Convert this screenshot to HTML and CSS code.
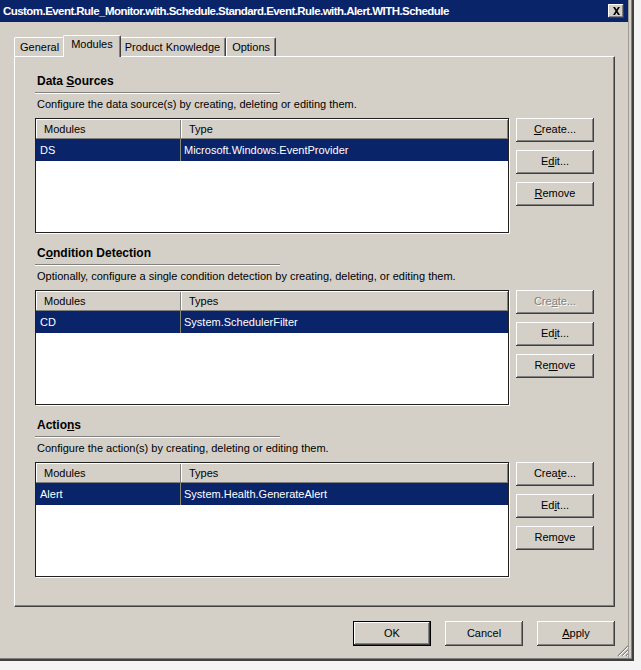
FILE: index.html
```html
<!DOCTYPE html>
<html lang="en">
<head>
    <meta charset="UTF-8">
    <title>Rule Properties</title>
    <link rel="stylesheet" href="styles.css">
</head>
<body>
    <div class="window">
        <div class="titlebar">
            <span class="title">Custom.Event.Rule_Monitor.with.Schedule.Standard.Event.Rule.with.Alert.WITH.Schedule</span>
            <span class="close">
                <svg width="9" height="8" viewBox="0 0 9 8"><path d="M1 0h2l1.5 2.5L6 0h2L5.5 4 8 8H6L4.5 5.5 3 8H1l2.5-4z" fill="#000"/></svg>
            </span>
        </div>

        <div class="tabs">
            <div class="tab">General</div>
            <div class="tab active">Modules</div>
            <div class="tab">Product Knowledge</div>
            <div class="tab">Options</div>
        </div>

        <div class="panel">
            <!-- Data sources -->
            <div class="section first">
                <div class="heading">Data <u>S</u>ources</div>
                <div class="rule"></div>
                <div class="desc">Configure the data source(s) by creating, deleting or editing them.</div>
                <div class="section-body">
                    <div class="list">
                        <div class="list-head">
                            <div class="col c1">Modules</div>
                            <div class="col c2">Type</div>
                        </div>
                        <div class="list-row selected">
                            <div class="col c1">DS</div>
                            <div class="col c2">Microsoft.Windows.EventProvider</div>
                        </div>
                    </div>
                    <div class="side-buttons">
                        <div class="btn"><u>C</u>reate...</div>
                        <div class="btn">E<u>d</u>it...</div>
                        <div class="btn"><u>R</u>emove</div>
                    </div>
                </div>
            </div>

            <!-- Condition detection -->
            <div class="section">
                <div class="heading">C<u>o</u>ndition Detection</div>
                <div class="rule"></div>
                <div class="desc">Optionally, configure a single condition detection by creating, deleting, or editing them.</div>
                <div class="section-body">
                    <div class="list">
                        <div class="list-head">
                            <div class="col c1">Modules</div>
                            <div class="col c2">Types</div>
                        </div>
                        <div class="list-row selected">
                            <div class="col c1">CD</div>
                            <div class="col c2">System.SchedulerFilter</div>
                        </div>
                    </div>
                    <div class="side-buttons">
                        <div class="btn disabled">Cre<u>a</u>te...</div>
                        <div class="btn">Ed<u>i</u>t...</div>
                        <div class="btn">Re<u>m</u>ove</div>
                    </div>
                </div>
            </div>

            <!-- Actions -->
            <div class="section">
                <div class="heading">Actio<u>n</u>s</div>
                <div class="rule"></div>
                <div class="desc">Configure the action(s) by creating, deleting or editing them.</div>
                <div class="section-body">
                    <div class="list">
                        <div class="list-head">
                            <div class="col c1">Modules</div>
                            <div class="col c2">Types</div>
                        </div>
                        <div class="list-row selected">
                            <div class="col c1">Alert</div>
                            <div class="col c2">System.Health.GenerateAlert</div>
                        </div>
                    </div>
                    <div class="side-buttons">
                        <div class="btn">Crea<u>t</u>e...</div>
                        <div class="btn">Ed<u>i</u>t...</div>
                        <div class="btn">Rem<u>o</u>ve</div>
                    </div>
                </div>
            </div>
        </div>

        <div class="footer">
            <div class="btn default">OK</div>
            <div class="btn">Cancel</div>
            <div class="btn"><u>A</u>pply</div>
        </div>
        <svg class="grip" width="12" height="12" viewBox="0 0 12 12">
            <path d="M11 1L1 11M11 5L5 11M11 9L9 11" stroke="#808080" stroke-width="1.2"/>
            <path d="M11 2L2 11M11 6L6 11M11 10L10 11" stroke="#fff" stroke-width="1"/>
        </svg>
    </div>
</body>
</html>
```

FILE: styles.css
```css
body {
    margin: 0;
    background-color: #f4f4f4;
    font-family: "Liberation Sans", Arial, sans-serif;
    font-size: 11px;
    color: #000;
}
u {
    text-decoration-thickness: 1px;
    text-underline-offset: 1px;
}
.window {
    position: relative;
    width: 634px;
    height: 661px;
    box-sizing: border-box;
    background-color: #d4d0c8;
    border-right: 2px solid #404040;
    border-bottom: 2px solid #404040;
    box-shadow: inset -1px -1px #808080, inset -3px 0 #d4d0c8, inset -4px 0 #a09c94;
}
.titlebar {
    height: 22px;
    margin-right: 4px;
    background-color: #0a246a;
    display: flex;
    align-items: center;
    justify-content: space-between;
    padding: 0 4px 0 3px;
}
.title {
    color: #fff;
    font-weight: bold;
    font-size: 11.5px;
    letter-spacing: -0.55px;
}
.close {
    width: 16px;
    height: 14px;
    background-color: #d4d0c8;
    display: flex;
    align-items: center;
    justify-content: center;
    box-shadow: inset -1px -1px #404040, inset 1px 1px #fff, inset -2px -2px #808080;
}

/* tabs */
.tabs {
    display: flex;
    align-items: flex-end;
    height: 20px;
    margin: 14px 0 0 14px;
}
.tab {
    height: 18px;
    line-height: 18px;
    padding: 0 5px;
    border-top: 1px solid #fff;
    border-left: 1px solid #fff;
    border-right: 1px solid #404040;
    border-radius: 2px 2px 0 0;
    box-shadow: inset -1px 0 #808080;
}
.tab.active {
    height: 21px;
    line-height: 17px;
    margin: 0 -2px -1px -2px;
    padding: 0 7px;
    position: relative;
    z-index: 1;
    background-color: #d4d0c8;
}
.panel {
    width: 601px;
    height: 551px;
    box-sizing: border-box;
    margin-left: 14px;
    border-top: 1px solid #fff;
    border-left: 1px solid #fff;
    border-right: 1px solid #404040;
    border-bottom: 1px solid #404040;
    box-shadow: inset -1px -1px #808080;
    padding: 17px 0 0 20px;
}

/* sections */
.section {
    margin-top: 13px;
}
.section.first {
    margin-top: 0;
}
.heading {
    font-weight: bold;
    font-size: 12px;
    line-height: 14px;
    padding-left: 2px;
}
.rule {
    width: 245px;
    height: 1px;
    margin-top: 4px;
    background-color: #808080;
    border-bottom: 1px solid #fff;
}
.desc {
    line-height: 14px;
    margin-top: 3px;
    padding-left: 2px;
}
.section-body {
    display: flex;
    gap: 7px;
    margin-top: 7px;
}
.list {
    width: 474px;
    height: 115px;
    box-sizing: border-box;
    background-color: #fff;
    border: 1px solid #202020;
    box-shadow: 1px 1px #fff;
}
.list-head {
    display: flex;
    height: 19px;
    background-color: #d4d0c8;
    border-bottom: 1px solid #808080;
}
.list-head .col {
    line-height: 18px;
    padding-left: 7px;
    border-top: 1px solid #fff;
    border-left: 1px solid #fff;
    box-shadow: inset -1px 0 #808080;
}
.list-row {
    display: flex;
    height: 22px;
    line-height: 22px;
}
.list-row .col {
    padding-left: 4px;
}
.col {
    box-sizing: border-box;
}
.c1 {
    width: 145px;
}
.c2 {
    flex: 1;
}
.list-row .c2 {
    padding-left: 3px;
}
.list-row.selected {
    background-color: #0a246a;
    color: #fff;
}
.list-row.selected .c1 {
    border-right: 1px solid #8a8a70;
}

/* buttons */
.side-buttons {
    display: flex;
    flex-direction: column;
    gap: 8px;
}
.btn {
    width: 78px;
    height: 24px;
    line-height: 23px;
    box-sizing: border-box;
    text-align: center;
    background-color: #d4d0c8;
    box-shadow: inset -1px -1px #404040, inset 1px 1px #fff, inset -2px -2px #808080;
}
.btn.disabled {
    color: #808080;
    text-shadow: 1px 1px #fff;
}
.footer {
    display: flex;
    justify-content: flex-end;
    gap: 14px;
    width: 615px;
    margin-top: 14px;
}
.footer .btn {
    height: 25px;
    line-height: 25px;
}
.btn.default {
    border: 1px solid #000;
    line-height: 23px;
}
.grip {
    position: absolute;
    right: 3px;
    bottom: 2px;
}
```
